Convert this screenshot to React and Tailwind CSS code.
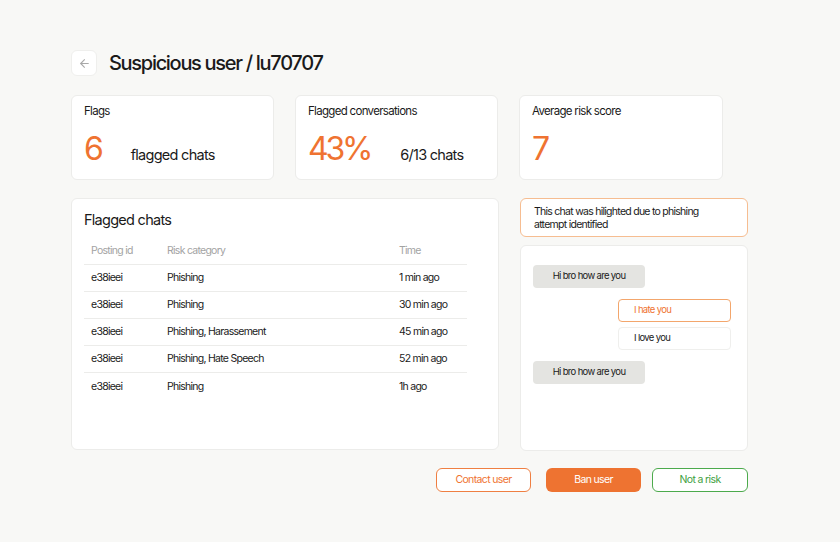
import React from "react";

const rows = [
  { id: "e38ieei", risk: "Phishing", time: "1 min ago" },
  { id: "e38ieei", risk: "Phishing", time: "30 min ago" },
  { id: "e38ieei", risk: "Phishing, Harassement", time: "45 min ago" },
  { id: "e38ieei", risk: "Phishing, Hate Speech", time: "52 min ago" },
  { id: "e38ieei", risk: "Phishing", time: "1h ago" },
];

const StatCard = ({ label, value, note }) => (
  <div className="h-[85px] bg-white border border-[#ececea] rounded-md px-3 pt-[7px]">
    <div className="text-[11.5px] leading-4 tracking-[-0.06em] text-[#1a1a1a]">{label}</div>
    <div className="flex items-baseline gap-[30px] mt-[12px]">
      <span className="text-[32px] leading-9 tracking-[-0.1em] text-[#ef7331]">{value}</span>
      {note && <span className="text-[14.5px] tracking-[-0.05em] text-[#1a1a1a]">{note}</span>}
    </div>
  </div>
);

export default function App() {
  return (
    <div
      className="w-full h-[542px] bg-[#f8f8f6] pl-[71px] pt-[50px] text-[#1a1a1a]"
      style={{ fontFamily: "Inter, 'Noto Sans', sans-serif" }}
    >
      {/* header */}
      <div className="flex items-center gap-3 h-[26px]">
        <button className="w-[26px] h-[26px] rounded-md bg-white border border-[#efefed] flex items-center justify-center">
          <svg width="13" height="13" viewBox="0 0 24 24" fill="none" stroke="#a8a8a8" strokeWidth="2" strokeLinecap="round" strokeLinejoin="round">
            <path d="M19 12H5" />
            <path d="M12 19l-7-7 7-7" />
          </svg>
        </button>
        <h1 className="text-[20px] leading-[26px] font-medium tracking-[-0.065em]">Suspicious user / lu70707</h1>
      </div>

      {/* stats */}
      <div className="grid grid-cols-[203px_203px_204px] gap-[21px] mt-[19px]">
        <StatCard label="Flags" value="6" note="flagged chats" />
        <StatCard label="Flagged conversations" value="43%" note="6/13 chats" />
        <StatCard label="Average risk score" value="7" />
      </div>

      {/* body */}
      <div className="flex gap-[21px] mt-[18px]">
        <div className="w-[428px] h-[252px] bg-white border border-[#ececea] rounded-md px-3 pt-[11px]">
          <div className="text-[14.5px] leading-5 tracking-[-0.05em]">Flagged chats</div>
          <div className="w-[383px] mt-[8px] text-[10.5px] tracking-[-0.07em]">
            <div className="grid grid-cols-[76px_232px_1fr] h-[27px] items-center border-b border-[#ececea] text-[#a3a3a3] pl-[7px]">
              <span>Posting id</span>
              <span>Risk category</span>
              <span>Time</span>
            </div>
            {rows.map((r, i) => (
              <div
                key={i}
                className={`grid grid-cols-[76px_232px_1fr] h-[27px] items-center pl-[7px] ${i < rows.length - 1 ? "border-b border-[#ececea]" : ""}`}
              >
                <span>{r.id}</span>
                <span>{r.risk}</span>
                <span>{r.time}</span>
              </div>
            ))}
          </div>
        </div>

        <div className="w-[228px] flex flex-col gap-2">
          <div className="h-[39px] bg-white border border-[#f6bd91] rounded-md px-[13px] flex items-center">
            <p className="text-[10.5px] leading-[13px] tracking-[-0.07em] w-[180px]">
              This chat was hilighted due to phishing attempt identified
            </p>
          </div>
          <div className="h-[206px] bg-white border border-[#ececea] rounded-md pl-[12px] pr-[16px] pt-[19px] flex flex-col text-[9.5px] tracking-[-0.07em]">
            <div className="w-[112px] h-[23px] bg-[#e4e4e1] rounded flex items-center justify-center">Hi bro how are you</div>
            <div className="self-end w-[113px] h-[23px] mt-[11px] border border-[#f3a66c] rounded flex items-center pl-[15px] text-[#ef7331]">I hate you</div>
            <div className="self-end w-[113px] h-[23px] mt-[5px] border border-[#efefed] rounded flex items-center pl-[15px]">I love you</div>
            <div className="w-[112px] h-[23px] mt-[11px] bg-[#e4e4e1] rounded flex items-center justify-center">Hi bro how are you</div>
          </div>
        </div>
      </div>

      {/* actions */}
      <div className="w-[677px] flex justify-end mt-[17px] text-[10.5px] tracking-[-0.06em]">
        <button className="w-[95px] h-[24px] rounded-md border border-[#ef7f42] text-[#ef7331] bg-white">Contact user</button>
        <button className="w-[95px] h-[24px] rounded-md bg-[#ee7331] text-white ml-[15px]">Ban user</button>
        <button className="w-[96px] h-[24px] rounded-md border border-[#4caa4c] text-[#3f9f3f] bg-white ml-[11px]">Not a risk</button>
      </div>
    </div>
  );
}
